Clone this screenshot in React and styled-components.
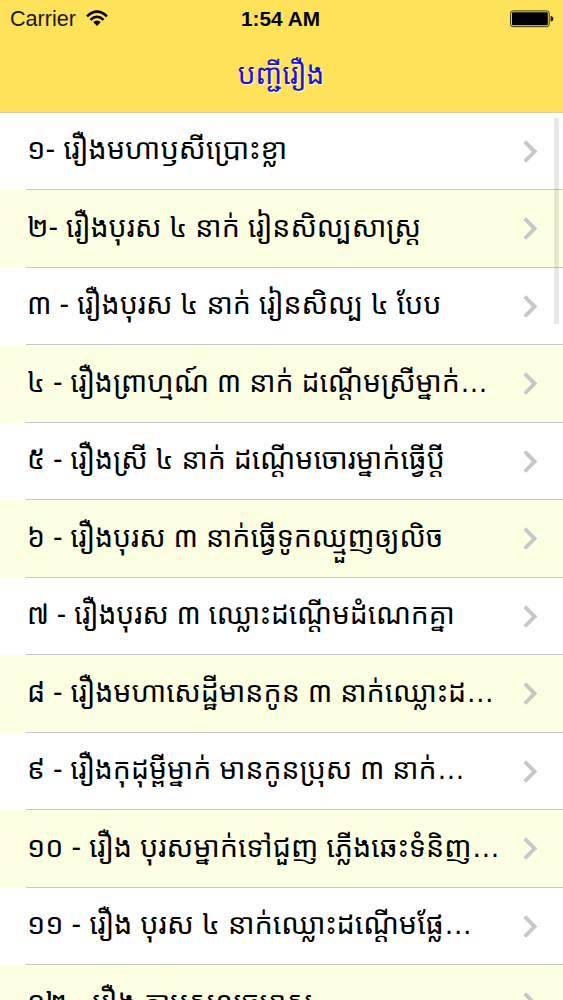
import { useLayoutEffect, useRef, useState } from "react";
import styled, { createGlobalStyle } from "styled-components";

const stories = [
  { title: "១- រឿងមហាឫសីប្រោះខ្លា", width: 261 },
  { title: "២- រឿងបុរស ៤ នាក់ រៀនសិល្បសាស្ត្រ", width: 395 },
  { title: "៣ - រឿងបុរស ៤ នាក់ រៀនសិល្ប ៤ បែប", width: 415 },
  { title: "៤ - រឿងព្រាហ្មណ៍ ៣ នាក់ ដណ្តើមស្រីម្នាក់…", width: 462 },
  { title: "៥ - រឿងស្រី ៤ នាក់ ដណ្តើមចោរម្នាក់ធ្វើប្តី", width: 419 },
  { title: "៦ - រឿងបុរស ៣ នាក់ធ្វើទូកឈ្មួញឲ្យលិច", width: 417 },
  { title: "៧ - រឿងបុរស ៣ ឈ្លោះដណ្តើមដំណេកគ្នា", width: 429 },
  { title: "៨ - រឿងមហាសេដ្ឋីមានកូន ៣ នាក់ឈ្លោះដ…", width: 469 },
  { title: "៩ - រឿងកុដុម្ពីម្នាក់ មានកូនប្រុស ៣ នាក់…", width: 439 },
  { title: "១០ - រឿង បុរសម្នាក់ទៅជួញ ភ្លើងឆេះទំនិញ…", width: 474 },
  { title: "១១ - រឿង បុរស ៤ នាក់ឈ្លោះដណ្តើមផ្លែ…", width: 447 },
  { title: "១២ - រឿង តាបសលួចមាស", width: 287 },
];

const App = () => {
  return (
    <Screen>
      <GlobalStyle />
      <Header>
        <StatusBar>
          <Carrier>
            Carrier
            <WifiIcon />
          </Carrier>
          <Clock>1:54 AM</Clock>
          <BatteryIcon />
        </StatusBar>
        <Title>បញ្ជីរឿង</Title>
      </Header>
      <List>
        {stories.map((story, index) => (
          <Row key={story.title} $striped={index % 2 === 1}>
            <RowContent>
              <FittedTitle width={story.width}>{story.title}</FittedTitle>
              <Chevron />
            </RowContent>
          </Row>
        ))}
        <ScrollIndicator />
      </List>
    </Screen>
  );
};

export default App;

// Stretches a title slightly so that it fills its width with any Khmer font.
const FittedTitle = ({ width, children }) => {
  const ref = useRef(null);
  const [scale, setScale] = useState(1);

  useLayoutEffect(() => {
    setScale(width / ref.current.offsetWidth);
  }, [width]);

  return (
    <RowTitle ref={ref} style={{ transform: `scaleX(${scale})` }}>
      {children}
    </RowTitle>
  );
};

const WifiIcon = () => (
  <svg width="22" height="17" viewBox="0 0 22 17">
    <g fill="none" stroke="#080600" strokeWidth="2.5">
      <path d="M1 6.3 Q11 -3 21 6.3" />
      <path d="M4.4 9.8 Q11 3.7 17.6 9.8" />
    </g>
    <path d="M7.2 12.1 Q11 8.8 14.8 12.1 L11 15.9 Z" fill="#080600" />
  </svg>
);

const BatteryIcon = () => (
  <svg width="44" height="18" viewBox="0 0 44 18">
    <rect x="0.6" y="0.9" width="38.6" height="15.8" rx="2.4" fill="none" stroke="#3b3415" strokeWidth="1" />
    <rect x="2" y="2.3" width="35.8" height="13" rx="1" fill="#000" />
    <path d="M40.6 6 Q43.4 6.4 43.4 8.8 Q43.4 11.2 40.6 11.6 Z" fill="#151205" />
  </svg>
);

const Chevron = () => (
  <svg width="16" height="24" viewBox="0 0 16 24">
    <path d="M1.8 2.7 L11.6 12.6 L1.8 22.5" fill="none" stroke="#c7c7c9" strokeWidth="3.9" />
  </svg>
);

const GlobalStyle = createGlobalStyle`
  body {
    margin: 0;
    background: #fff;
    overflow: hidden;
  }
`;

const Screen = styled.div`
  width: 563px;
  height: 1000px;
  overflow: hidden;

  font-family: "Liberation Sans", "Noto Sans Khmer", "Khmer OS", sans-serif;
  color: #000;
`;

const Header = styled.header`
  box-sizing: border-box;
  height: 113px;
  background: #fee35a;
  border-bottom: 1px solid #d6cda0;
`;

const StatusBar = styled.div`
  display: grid;
  grid-template-columns: 1fr auto 1fr;
  align-items: center;

  height: 37px;
  padding: 0 9px 0 10px;

  font-size: 21.6px;

  > svg {
    justify-self: end;
  }
`;

const Carrier = styled.div`
  display: flex;
  align-items: center;
  gap: 10px;
  color: #1a1605;
`;

const Clock = styled.div`
  padding-right: 3px;
  font-weight: bold;
  font-size: 20.8px;
`;

const Title = styled.h1`
  margin: 0;
  height: 75px;

  font-size: 28px;
  font-weight: normal;
  line-height: 75px;
  text-align: center;
  text-indent: -1px;
  color: #1a12d0;
  text-shadow: 1px 1px 1px #fff;
`;

const List = styled.div`
  position: relative;
  margin-top: -0.5px;
`;

const Row = styled.div`
  height: 77.5px;
  padding-left: 26px;
  background: ${({ $striped }) => ($striped ? "#fdffe3" : "transparent")};
`;

const RowContent = styled.div`
  box-sizing: border-box;
  display: flex;
  align-items: center;
  justify-content: space-between;

  height: 100%;
  padding-right: 24px;
  border-bottom: 1px solid #c8c7cc;
`;

const RowTitle = styled.div`
  padding: 0 0 3px 1px;

  font-size: 28.8px;
  line-height: 40px;
  white-space: nowrap;
  transform-origin: left center;
`;

const ScrollIndicator = styled.div`
  position: absolute;
  top: 5px;
  right: 4px;

  width: 5px;
  height: 206px;
  background: rgba(0, 0, 0, 0.09);
`;
